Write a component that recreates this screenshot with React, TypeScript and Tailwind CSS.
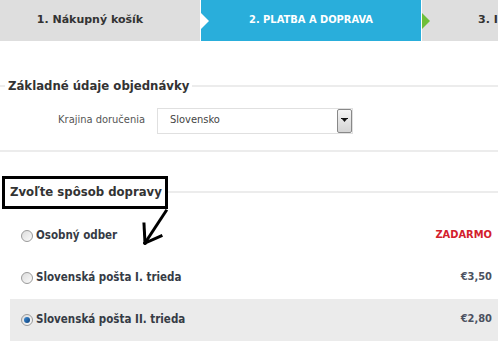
import React from "react";

const COND = { fontFamily: '"DejaVu Sans Condensed", "DejaVu Sans", Verdana, sans-serif', fontStretch: "semi-condensed" as const };

function Radio({ checked }: { checked?: boolean }) {
  return (
    <div className="w-[12px] h-[12px] rounded-full border border-[#9a9a9a] bg-gradient-to-br from-[#dcdcdc] to-[#fbfbfb] flex items-center justify-center shrink-0">
      {checked && <div className="w-[6px] h-[6px] rounded-full bg-gradient-to-br from-[#3f8fd8] to-[#0b3f7a]" />}
    </div>
  );
}

function Row({ label, price, red, active }: { label: string; price: string; red?: boolean; active?: boolean }) {
  return (
    <div className={`h-[42px] flex items-center pl-[11px] pr-[6px] ${active ? "bg-[#ebebeb]" : ""}`}>
      <Radio checked={active} />
      <span className="ml-[3px] text-[11.5px] font-bold text-[#363b45] flex-1" style={COND}>{label}</span>
      <span className={`text-[11px] font-bold ${red ? "text-[#d3202c]" : "text-[#4b5160]"}`} style={COND}>{price}</span>
    </div>
  );
}

export default function App() {
  return (
    <div className="w-[498px] h-[361px] bg-white overflow-hidden relative" style={{ fontFamily: '"DejaVu Sans", Verdana, sans-serif' }}>
      {/* Steps */}
      <div className="flex h-[41px]">
        <div className="w-[200px] bg-[#dedede] flex items-center justify-center pr-[20px] text-[11px] font-bold text-[#333]">
          1. Nákupný košík
        </div>
        <div className="w-[220px] ml-px bg-[#29aedb] relative flex items-center justify-center text-[11px] font-bold text-white" style={COND}>
          <svg className="absolute left-0 top-[13px]" width="8" height="16" viewBox="0 0 8 16">
            <polygon points="0,0 8,8 0,16" fill="#ffffff" />
          </svg>
          2. PLATBA A DOPRAVA
        </div>
        <div className="flex-1 ml-px bg-[#dedede] relative flex items-center pl-[56px] text-[11px] font-bold text-[#333] whitespace-nowrap overflow-hidden">
          <svg className="absolute left-0 top-[13px]" width="8" height="16" viewBox="0 0 8 16">
            <polygon points="0,0 8,8 0,16" fill="#6fbf3a" />
          </svg>
          3. I
        </div>
      </div>

      {/* Section 1 */}
      <div className="mt-[35px] flex items-center">
        <div className="w-[5px] h-[2px] bg-[#ececec]" />
        <div className="px-[3px] text-[13px] font-bold text-[#333]" style={COND}>Základné údaje objednávky</div>
        <div className="flex-1 h-[2px] bg-[#ececec]" />
      </div>
      <div className="mt-[12px] flex items-center">
        <div className="w-[145px] text-right text-[11px] text-[#555]" style={COND}>Krajina doručenia</div>
        <div className="ml-[12px] w-[196px] h-[26px] border border-[#e0e0e0] flex items-center relative">
          <span className="pl-[12px] text-[11px] text-[#444] flex-1" style={COND}>Slovensko</span>
          <div className="w-[15px] h-[24px] border border-[#888] rounded-[2px] bg-gradient-to-b from-[#f4f4f4] to-[#d4d4d4] flex items-center justify-center">
            <svg width="7" height="5" viewBox="0 0 7 5">
              <rect x="0" y="0" width="7" height="1" fill="#111" />
              <polygon points="1,1 6,1 3.5,4" fill="#111" />
            </svg>
          </div>
        </div>
      </div>
      <div className="mt-[16px] h-[2px] bg-[#ececec]" />

      {/* Section 2 */}
      <div className="mt-[24px] flex items-center">
        <div className="ml-[2px] border-[3px] border-black h-[33px] w-[166px] flex items-center pl-[5px] text-[13px] font-bold text-[#333] whitespace-nowrap" style={COND}>
          Zvoľte spôsob dopravy
        </div>
        <div className="flex-1 h-[2px] bg-[#ececec]" />
      </div>
      <div className="ml-[10px] mt-[6px]">
        <Row label="Osobný odber" price="ZADARMO" red />
        <Row label="Slovenská pošta I. trieda" price="€3,50" />
        <Row label="Slovenská pošta II. trieda" price="€2,80" active />
      </div>

      {/* Arrow annotation */}
      <svg className="absolute left-0 top-0 pointer-events-none" width="498" height="361">
        <g stroke="#000" strokeWidth="3" fill="none" strokeLinecap="square">
          <line x1="166" y1="211" x2="145" y2="243" />
          <line x1="145" y1="243" x2="144" y2="224" />
          <line x1="145" y1="243" x2="161" y2="236" />
        </g>
      </svg>
    </div>
  );
}
